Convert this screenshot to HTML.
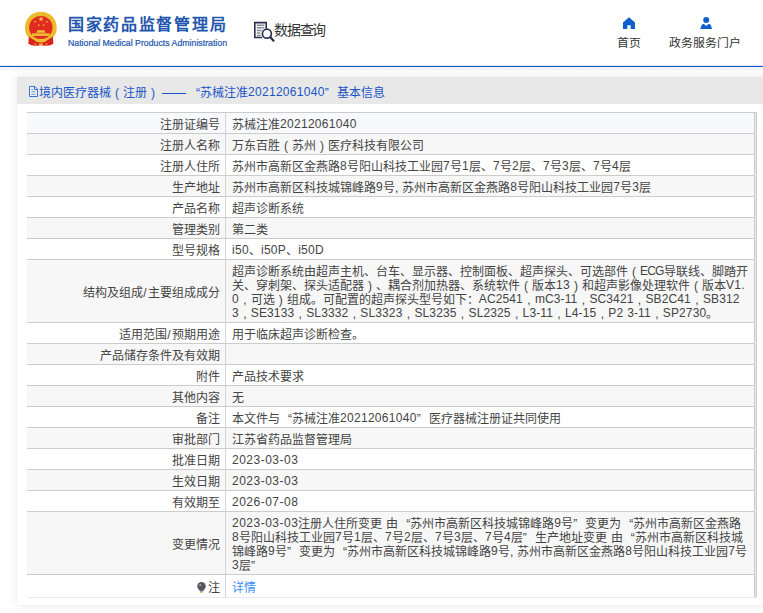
<!DOCTYPE html>
<html lang="zh-CN">
<head>
<meta charset="utf-8">
<title>国家药品监督管理局</title>
<style>
html,body{margin:0;padding:0;}
body{width:763px;height:613px;overflow:hidden;background:#fff;font-family:"Liberation Sans",sans-serif;font-size:12px;color:#444;position:relative;}
#hdr{position:absolute;left:0;top:0;width:763px;height:66px;background:#fff;}
#blue{position:absolute;left:0;top:65px;width:763px;height:2px;background:linear-gradient(#dde8f7 0,#dde8f7 50%,#0b5cc6 50%,#0b5cc6 100%);}
#hatch{position:absolute;left:0;top:67px;width:763px;height:3px;background:repeating-linear-gradient(135deg,#e0e0e0 0,#e0e0e0 0.7px,#fff 0.7px,#fff 2.12px);}
#emblem{position:absolute;left:24px;top:10px;width:34px;height:37px;}
#t1{position:absolute;left:68px;top:13px;font-size:16px;letter-spacing:1.7px;font-weight:bold;color:#2356ae;white-space:nowrap;line-height:24px;}
#t2{position:absolute;left:68px;top:37px;font-size:8.75px;-webkit-text-stroke:0.2px #2356ae;color:#2356ae;white-space:nowrap;line-height:12px;}
#sicon{position:absolute;left:253px;top:20px;width:22px;height:22px;}
#stext{position:absolute;left:274px;top:20px;font-size:14px;letter-spacing:-1.2px;color:#333;white-space:nowrap;line-height:20px;}
.nav{position:absolute;top:35px;font-size:11.9px;color:#333;white-space:nowrap;line-height:16px;}
.nico{position:absolute;top:16px;width:14px;height:13px;}
#panel{position:absolute;left:17px;top:77px;width:750px;height:528px;background:#fff;box-shadow:0 0 9px rgba(0,0,0,.10);}
#phead{position:absolute;left:0;top:0;width:750px;height:27px;background:#e8e8e8;}
#dicon{position:absolute;left:11.5px;top:9px;width:9px;height:11px;}
#ptitle{position:absolute;left:22px;top:7.5px;font-size:12px;color:#1a55c6;white-space:nowrap;line-height:16px;}
table{position:absolute;left:10px;top:35px;width:730px;border-collapse:separate;border-spacing:0;table-layout:fixed;}
td{border-top:1px solid #ccc;padding:5px 6px 1px 6px;line-height:14px;font-size:12px;color:#444;vertical-align:middle;white-space:nowrap;overflow:hidden;word-spacing:.5px;}
td.l{text-align:right;border-right:1px solid #d4d4d4;padding-right:5.5px;}
td.s{padding:0;border-left:1px solid #ccc;border-right:1px solid #ccc;background:#e6e6ee !important;}
tr:nth-child(even) td{background:#f7f7f7;}
tr:first-child td{background:#f7f9fc;}
tr:last-child td{border-bottom:1px solid #e9ebf3;padding-top:6px;padding-bottom:2px;}
#bulb{display:inline-block;width:9px;height:11px;vertical-align:-1px;margin-right:2px;}
.q1,.q2,.p{display:inline-block;width:12px;}
.ds{margin-left:3px;}
.sl{padding:0 .8px;}
td.s{border-top-color:#e6e6ee;}
tr:first-child td.s{border-top-color:#ccc;}
.q1{text-align:right;}.q2{text-align:left;}.p{text-align:center;}
.d,.dt,.e{position:relative;top:-.6px;}
.d{letter-spacing:.3px;}.dt{letter-spacing:.5px;}.e{letter-spacing:-.8px;}
.m .d{letter-spacing:.12px;}
a{color:#3d8df5;text-decoration:none;}
</style>
</head>
<body>
<div id="hdr">
<svg id="emblem" viewBox="24 10 34 37"><circle cx="40.850" cy="27.600" r="15.900" fill="#ecbb2c"/><circle cx="40.850" cy="27.600" r="11.700" fill="#e22b20"/><path d="M36.200 32.800l1.300-2.600h6.700l1.300 2.600z" fill="#f0c236"/><rect x="32" y="33.400" width="17.700" height="2.500" fill="#f0c236"/><path d="M28.800 36.800L36 41.200L37 45.600Q32 46.300 28.300 43.800zM52.900 36.800L45.700 41.200L44.700 45.600Q49.700 46.300 53.400 43.800z" fill="#d9241c"/><path d="M35.500 42h10.700l-1 3.800q-4.300-1.200-8.700 0z" fill="#d9241c"/><ellipse cx="40.850" cy="40.600" rx="4.600" ry="1.900" fill="#efc034"/><path d="M33.500 43.200l2.500 0.500l-0.300 1.500zM48.200 43.200l-2.500 0.500l0.300 1.500zM38.500 43.600h4.700l-1 1.300h-2.700z" fill="#efc034"/><polygon points="41.00,16.30 41.69,18.15 43.66,18.23 42.12,19.46 42.65,21.37 41.00,20.28 39.35,21.37 39.88,19.46 38.34,18.23 40.31,18.15" fill="#f3c93a"/><polygon points="35.00,20.40 35.32,21.26 36.24,21.30 35.52,21.87 35.76,22.75 35.00,22.25 34.24,22.75 34.48,21.87 33.76,21.30 34.68,21.26" fill="#f3c93a"/><polygon points="46.90,20.40 47.22,21.26 48.14,21.30 47.42,21.87 47.66,22.75 46.90,22.25 46.14,22.75 46.38,21.87 45.66,21.30 46.58,21.26" fill="#f3c93a"/><polygon points="38.70,23.90 39.02,24.76 39.94,24.80 39.22,25.37 39.46,26.25 38.70,25.75 37.94,26.25 38.18,25.37 37.46,24.80 38.38,24.76" fill="#f3c93a"/><polygon points="43.60,23.90 43.92,24.76 44.84,24.80 44.12,25.37 44.36,26.25 43.60,25.75 42.84,26.25 43.08,25.37 42.36,24.80 43.28,24.76" fill="#f3c93a"/></svg>
<div id="t1">国家药品监督管理局</div>
<div id="t2">National Medical Products Administration</div>
<svg id="sicon" viewBox="253 20 22 22"><path d="M266.200 28.500V22.600H254.800V37.500H262" fill="none" stroke="#2b2d4e" stroke-width="1.600"/><path d="M256.800 25.200h7.500M256.800 27.800h7.500M256.800 30.400h5M256.800 33h3.500M256.800 35.500h4" stroke="#8a8a92" stroke-width="1.500"/><circle cx="266.900" cy="33.700" r="4.500" fill="#fff" stroke="#2b2d4e" stroke-width="1.700"/><path d="M270.300 37.100L273.500 40.700" stroke="#2b2d4e" stroke-width="2.200" stroke-linecap="round"/></svg>
<div id="stext">数据查询</div>
<svg class="nico" style="left:622px;top:16px;width:14px;height:14px" viewBox="622 16 14 14"><path d="M629 17.300L623 22.600V29H627.300V25.300H630.700V29H635V22.600z" fill="#0d5fc9"/></svg>
<div class="nav" style="left:617px">首页</div>
<svg class="nico" style="left:699px;top:16px;width:14px;height:14px" viewBox="699 16 14 14"><circle cx="706.200" cy="20" r="3" fill="#0d5fc9"/><path d="M700.200 29L701.600 25.300Q702.200 24 704 24L706.200 25.900L708.400 24Q710.200 24 710.800 25.300L712.200 29z" fill="#0d5fc9"/></svg>
<div class="nav" style="left:669px">政务服务门户</div>
</div>
<div id="blue"></div>
<div id="hatch"></div>
<div id="panel">
<div id="phead"></div>
<svg id="dicon" viewBox="0 0 9 11"><path d="M0.5 0.5h5.500l2.500 2.500v7.500h-8z" fill="#f3f3f3" stroke="#1a5ccb" stroke-width=".85"/><path d="M5.500 0.800v2.700h2.700" fill="none" stroke="#1a5ccb" stroke-width=".9"/><path d="M2.300 3.500h1.700M2.300 5.700h4.200M2.300 8.300h4.200" stroke="#5a7fd0" stroke-width=".9"/></svg>
<div id="ptitle">境内医疗器械<span class="p">(</span>注册<span class="p">)</span><span class="ds">——</span><span class="q1" style="width:14px">“</span>苏械注准<span class="d">20212061040</span><span class="q2" style="width:12.5px">”</span>基本信息</div>
<table>
<colgroup><col style="width:199px"><col style="width:528px"><col style="width:3px"></colgroup>
<tr><td class="l">注册证编号</td><td>苏械注准<span class="d">20212061040</span></td><td class="s"></td></tr>
<tr><td class="l">注册人名称</td><td>万东百胜<span class="p">(</span>苏州<span class="p">)</span>医疗科技有限公司</td><td class="s"></td></tr>
<tr><td class="l">注册人住所</td><td>苏州市高新区金燕路<span class="d">8</span>号阳山科技工业园<span class="d">7</span>号<span class="d">1</span>层、<span class="d">7</span>号<span class="d">2</span>层、<span class="d">7</span>号<span class="d">3</span>层、<span class="d">7</span>号<span class="d">4</span>层</td><td class="s"></td></tr>
<tr><td class="l">生产地址</td><td>苏州市高新区科技城锦峰路<span class="d">9</span>号, 苏州市高新区金燕路<span class="d">8</span>号阳山科技工业园<span class="d">7</span>号<span class="d">3</span>层</td><td class="s"></td></tr>
<tr><td class="l">产品名称</td><td>超声诊断系统</td><td class="s"></td></tr>
<tr><td class="l">管理类别</td><td>第二类</td><td class="s"></td></tr>
<tr><td class="l">型号规格</td><td><span class="d">i50</span>、<span class="d">i50P</span>、<span class="d">i50D</span></td><td class="s"></td></tr>
<tr><td class="l">结构及组成<span class="sl">/</span>主要组成成分</td><td>超声诊断系统由超声主机、台车、显示器、控制面板、超声探头、可选部件<span class="p">(</span><span class="e">ECG</span>导联线、脚踏开<br>关、穿刺架、探头适配器<span class="p">)</span>、耦合剂加热器、系统软件<span class="p">(</span>版本<span class="d">13</span><span class="p">)</span>和超声影像处理软件<span class="p">(</span>版本<span class="d">V1.</span><br><span class="m"><span class="d">0</span><span class="p">,</span>可选<span class="p">)</span>组成。可配置的超声探头型号如下：<span class="d">AC2541</span><span class="p">,</span><span class="d">mC3-11</span><span class="p">,</span><span class="d">SC3421</span><span class="p">,</span><span class="d">SB2C41</span><span class="p">,</span><span class="d">SB312</span><br><span class="d">3</span><span class="p">,</span><span class="d">SE3133</span><span class="p">,</span><span class="d">SL3332</span><span class="p">,</span><span class="d">SL3323</span><span class="p">,</span><span class="d">SL3235</span><span class="p">,</span><span class="d">SL2325</span><span class="p">,</span><span class="d">L3-11</span><span class="p">,</span><span class="d">L4-15</span><span class="p">,</span><span class="d">P2 3-11</span><span class="p">,</span><span class="d">SP2730</span>。</span></td><td class="s"></td></tr>
<tr><td class="l">适用范围<span class="sl">/</span>预期用途</td><td>用于临床超声诊断检查。</td><td class="s"></td></tr>
<tr><td class="l">产品储存条件及有效期</td><td></td><td class="s"></td></tr>
<tr><td class="l">附件</td><td>产品技术要求</td><td class="s"></td></tr>
<tr><td class="l">其他内容</td><td>无</td><td class="s"></td></tr>
<tr><td class="l">备注</td><td>本文件与<span class="q1">“</span>苏械注准<span class="d">20212061040</span><span class="q2">”</span>医疗器械注册证共同使用</td><td class="s"></td></tr>
<tr><td class="l">审批部门</td><td>江苏省药品监督管理局</td><td class="s"></td></tr>
<tr><td class="l">批准日期</td><td><span class="dt">2023-03-03</span></td><td class="s"></td></tr>
<tr><td class="l">生效日期</td><td><span class="dt">2023-03-03</span></td><td class="s"></td></tr>
<tr><td class="l">有效期至</td><td><span class="dt">2026-07-08</span></td><td class="s"></td></tr>
<tr><td class="l">变更情况</td><td><span class="dt">2023-03-03</span>注册人住所变更 由<span class="q1">“</span>苏州市高新区科技城锦峰路<span class="d">9</span>号<span class="q2">”</span>变更为<span class="q1">“</span>苏州市高新区金燕路<br><span class="d">8</span>号阳山科技工业园<span class="d">7</span>号<span class="d">1</span>层、<span class="d">7</span>号<span class="d">2</span>层、<span class="d">7</span>号<span class="d">3</span>层、<span class="d">7</span>号<span class="d">4</span>层<span class="q2">”</span>生产地址变更 由<span class="q1">“</span>苏州市高新区科技城<br>锦峰路<span class="d">9</span>号<span class="q2">”</span>变更为<span class="q1">“</span>苏州市高新区科技城锦峰路<span class="d">9</span>号, 苏州市高新区金燕路<span class="d">8</span>号阳山科技工业园<span class="d">7</span>号<br><span class="d">3</span>层<span class="q2">”</span></td><td class="s"></td></tr>
<tr><td class="l"><svg id="bulb" viewBox="0 0 9 11"><circle cx="4.500" cy="4.300" r="4.200" fill="#56565c"/><circle cx="3.200" cy="3" r="1.200" fill="#9a9aa0"/><rect x="2.700" y="8" width="3.600" height="1.600" fill="#6a6a70"/><rect x="3.300" y="9.800" width="2.400" height="1" fill="#d8a040"/></svg>注</td><td><a>详情</a></td><td class="s"></td></tr>
</table>
</div>
</body>
</html>
